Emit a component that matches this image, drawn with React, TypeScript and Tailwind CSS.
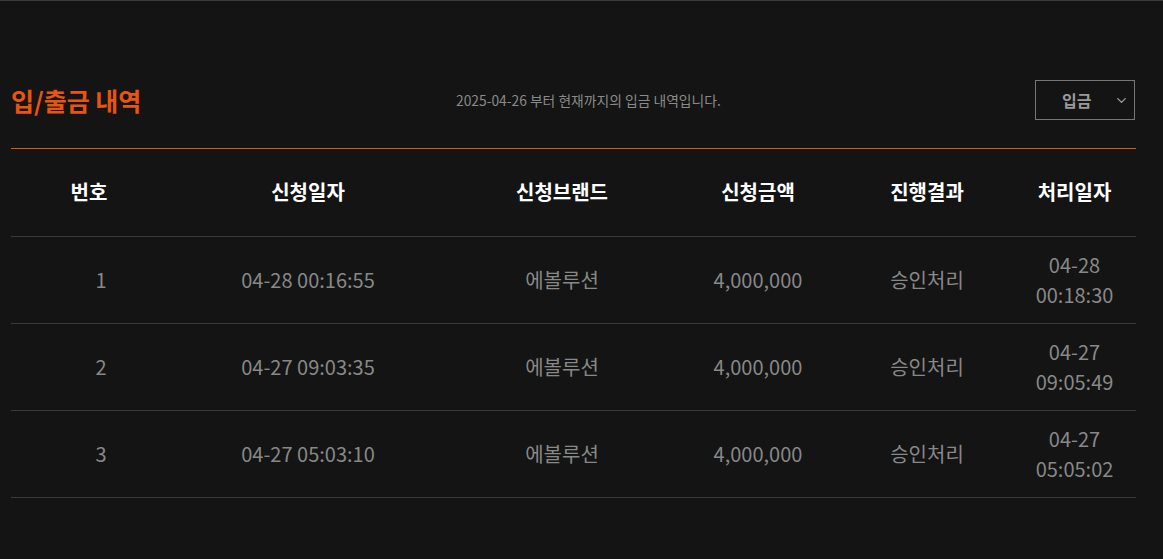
import { ChevronDown } from 'lucide-react'

type Row = {
  no: number
  requestedAt: string
  brand: string
  amount: string
  status: string
  processedDate: string
  processedTime: string
}

const rows: Row[] = [
  { no: 1, requestedAt: '04-28 00:16:55', brand: '에볼루션', amount: '4,000,000', status: '승인처리', processedDate: '04-28', processedTime: '00:18:30' },
  { no: 2, requestedAt: '04-27 09:03:35', brand: '에볼루션', amount: '4,000,000', status: '승인처리', processedDate: '04-27', processedTime: '09:05:49' },
  { no: 3, requestedAt: '04-27 05:03:10', brand: '에볼루션', amount: '4,000,000', status: '승인처리', processedDate: '04-27', processedTime: '05:05:02' },
]

const font = { fontFamily: '"Noto Sans CJK KR", "Noto Sans", sans-serif' }

export default function App() {
  return (
    <div
      className="min-h-[559px] border-t border-[#3c3c3c] bg-[#141414] pl-[11px] pr-[27px] pt-[79px]"
      style={font}
    >
      <div className="flex h-10 items-center">
        <h2 className="w-[445px] text-[25px] font-bold leading-none text-[#e8550f]">입/출금 내역</h2>
        <p className="flex-1 text-[13.8px] text-[#8a8a8a]">2025-04-26 부터 현재까지의 입금 내역입니다.</p>
        <div className="mr-px flex h-10 w-[100px] items-center justify-between border border-[#777] pl-[26px] pr-[5px]">
          <span className="text-[16px] font-bold text-[#9a9a9a]">입금</span>
          <ChevronDown size={15} strokeWidth={2.25} className="text-[#9a9a9a]" />
        </div>
      </div>
      <div className="mt-[28px] border-b border-[#e8520c]" />
      <table className="w-full table-fixed border-collapse text-center">
        <thead>
          <tr className="h-[87px] border-b border-[#3a3a3a] text-[20px] font-bold text-white">
            <th className="w-[156px] font-bold">번호</th>
            <th className="w-[282px] font-bold">신청일자</th>
            <th className="w-[226px] font-bold">신청브랜드</th>
            <th className="w-[166px] font-bold">신청금액</th>
            <th className="w-[172px] font-bold">진행결과</th>
            <th className="font-bold">처리일자</th>
          </tr>
        </thead>
        <tbody>
          {rows.map((row) => (
            <tr key={row.no} className="border-b border-[#3a3a3a] text-[20px] leading-[30px] text-[#888]">
              <td className="py-[13px] pl-[24px]">{row.no}</td>
              <td className="py-[13px]">{row.requestedAt}</td>
              <td className="py-[13px]">{row.brand}</td>
              <td className="py-[13px]">{row.amount}</td>
              <td className="py-[13px]">{row.status}</td>
              <td className="py-[13px]">
                {row.processedDate}
                <br />
                {row.processedTime}
              </td>
            </tr>
          ))}
        </tbody>
      </table>
    </div>
  )
}
